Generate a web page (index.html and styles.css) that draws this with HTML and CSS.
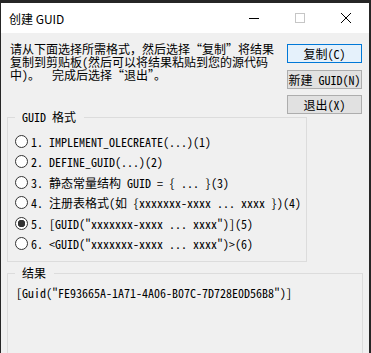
FILE: index.html
```html
<!DOCTYPE html>
<html lang="zh-CN">
<head>
    <meta charset="UTF-8">
    <meta name="viewport" content="width=device-width, initial-scale=1.0">
    <title>创建 GUID</title>
    <link rel="stylesheet" href="styles.css">
</head>
<body>
    <div class="window">
        <div class="titlebar">
            <div class="title">创建 GUID</div>
            <div class="controls">
                <div class="ctl">
                    <svg width="10" height="10" viewBox="0 0 10 10"><path d="M0 5.5H10" stroke="#000" stroke-width="1"/></svg>
                </div>
                <div class="ctl">
                    <svg width="10" height="10" viewBox="0 0 10 10"><rect x="0.5" y="0.5" width="9" height="9" fill="none" stroke="#c6c6c6" stroke-width="1"/></svg>
                </div>
                <div class="ctl">
                    <svg width="10" height="10" viewBox="0 0 10 10"><path d="M0 0L10 10M10 0L0 10" stroke="#000" stroke-width="1"/></svg>
                </div>
            </div>
        </div>

        <div class="content">
            <div class="top">
                <div class="intro">
                    <div>请从下面选择所需格式，然后选择“复制”将结果</div>
                    <div>复制到剪贴板(然后可以将结果粘贴到您的源代码</div>
                    <div>中)。  完成后选择“退出”。</div>
                </div>
                <div class="buttons">
                    <button class="btn default">复制(C)</button>
                    <button class="btn">新建 GUID(N)</button>
                    <button class="btn">退出(X)</button>
                </div>
            </div>

            <fieldset class="group formats">
                <legend>GUID 格式</legend>
                <label class="opt"><input type="radio" name="fmt">1. IMPLEMENT_OLECREATE(...)(1)</label>
                <label class="opt"><input type="radio" name="fmt">2. DEFINE_GUID(...)(2)</label>
                <label class="opt"><input type="radio" name="fmt">3. 静态常量结构 GUID = { ... }(3)</label>
                <label class="opt"><input type="radio" name="fmt">4. 注册表格式(如 {xxxxxxx-xxxx ... xxxx })(4)</label>
                <label class="opt"><input type="radio" name="fmt" checked>5. [GUID("xxxxxxx-xxxx ... xxxx")](5)</label>
                <label class="opt"><input type="radio" name="fmt">6. &lt;GUID("xxxxxxx-xxxx ... xxxx")&gt;(6)</label>
            </fieldset>

            <fieldset class="group result">
                <legend>结果</legend>
                <div class="output">[Guid("FE93665A-1A71-4A06-B07C-7D728E0D56B8")]</div>
            </fieldset>
        </div>
    </div>
</body>
</html>
```

FILE: styles.css
```css
body {
    margin: 0;
    background-color: #262626;
    overflow: hidden;
}

.window {
    margin: 3px 2px 0 1px;
    height: 350px;
    background-color: #f0f0f0;
    overflow: hidden;
    font-family: "Noto Sans Mono CJK SC", "Noto Sans CJK SC", monospace;
    font-size: 12px;
    color: #000;
}

.titlebar {
    height: 30px;
    background-color: #fff;
    display: flex;
    align-items: center;
    justify-content: space-between;
}

.title {
    padding-left: 8px;
    font-family: "Noto Sans CJK SC", sans-serif;
    font-size: 12px;
}

.controls {
    display: flex;
    height: 30px;
}

.ctl {
    width: 46px;
    display: flex;
    align-items: center;
    justify-content: center;
}

.content {
    padding: 0 6px;
}

.top {
    height: 78px;
    box-sizing: border-box;
    padding-top: 9px;
    display: flex;
    justify-content: space-between;
}

.intro {
    margin-left: 3px;
}

.intro div {
    height: 13px;
    line-height: 13px;
    white-space: pre;
}

.buttons {
    margin: 2px 1px 0 0;
    display: flex;
    flex-direction: column;
    gap: 6.5px;
}

.btn {
    width: 75px;
    height: 19px;
    padding: 0;
    border: 1px solid #adadad;
    background-color: #e1e1e1;
    font-family: inherit;
    font-size: 12px;
    line-height: 17px;
    color: #000;
}

.btn.default {
    border-color: #0078d7;
    background-color: #e5f1fb;
}

.group {
    margin: 0;
    border: 1px solid #dcdcdc;
    padding: 8px 0 7px 0;
}

.group legend {
    margin-left: 7px;
    padding: 0 8px 0 7px;
    line-height: 12px;
}

.formats {
    width: 300px;
    box-sizing: border-box;
}

.opt {
    display: flex;
    align-items: center;
    height: 20.5px;
    white-space: pre;
}

.opt input {
    appearance: none;
    width: 13px;
    height: 13px;
    margin: 0 3px 0 7px;
    border: 1px solid #333;
    border-radius: 50%;
    background-color: #fff;
}

.opt input:checked {
    background: radial-gradient(circle, #333 0 3.5px, #fff 4px);
}

.result {
    margin-top: 5px;
    height: 100px;
}

.output {
    padding-left: 8px;
    line-height: 12px;
}
```
